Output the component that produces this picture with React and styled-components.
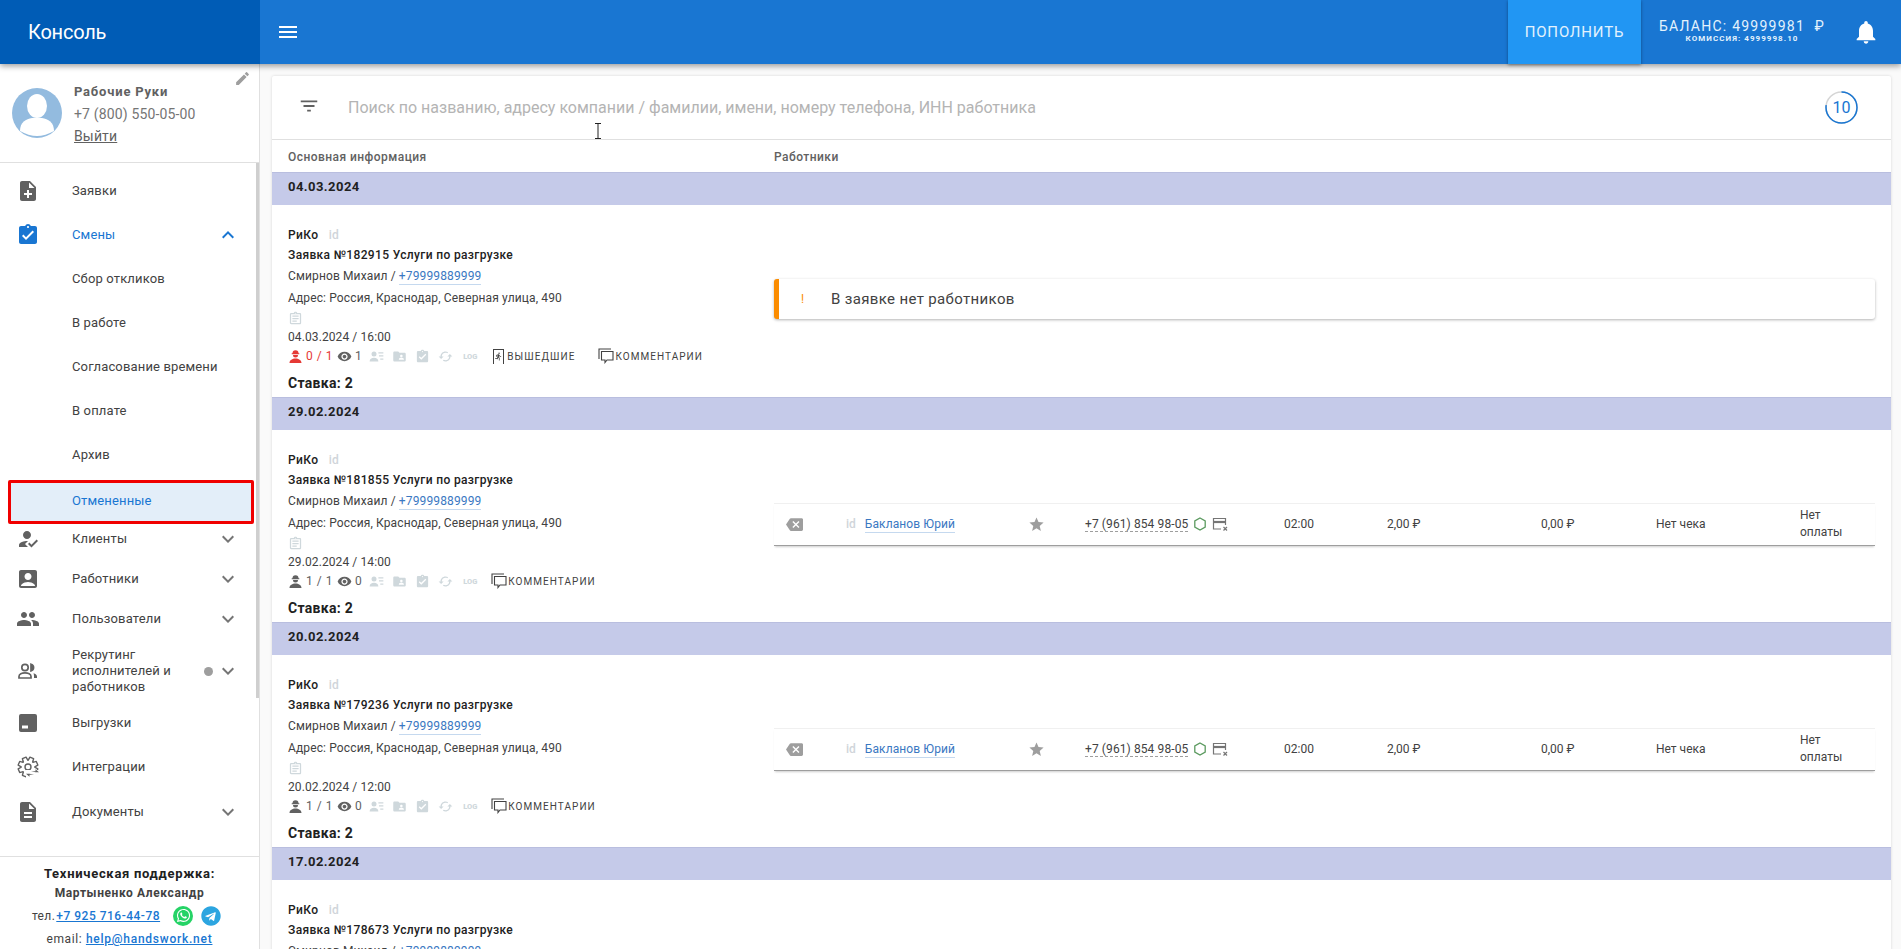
import React from 'react';
import styled, { createGlobalStyle } from 'styled-components';
import {
  MdMenu, MdNotifications, MdEdit, MdNoteAdd, MdAssignmentTurnedIn, MdExpandLess, MdExpandMore,
  MdHowToReg, MdAccountBox, MdPeople, MdDescription,
  MdFilterList, MdOutlineAssignment, MdVisibility, MdFolderShared, MdCached,
  MdBackspace, MdStar, MdDirectionsRun,
} from 'react-icons/md';
import { FaWhatsapp, FaTelegram } from 'react-icons/fa';

const GlobalStyle = createGlobalStyle`
    html, body { margin: 0; padding: 0; height: 100%; overflow: hidden; }
    body { font-family: Roboto, "Liberation Sans", sans-serif; background: #fafafa; color: #212121; }
    *, *::before, *::after { box-sizing: border-box; }
`;

const blue = '#1976d2';

const Page = styled.div`
    height: 100vh;
    display: flex;
    flex-direction: column;
    overflow: hidden;
`;

const Header = styled.header`
    height: 64px;
    flex: none;
    display: flex;
    align-items: center;
    background: ${blue};
    color: white;
    box-shadow: 0 2px 6px rgba(0,0,0,.4);
    position: relative;
    z-index: 5;
`;

const Brand = styled.div`
    width: 260px;
    height: 100%;
    padding-left: 28px;
    display: flex;
    align-items: center;
    background: #005cb6;
    font-size: 20px;
    letter-spacing: -.2px;
`;

const MenuButton = styled.div`
    margin-left: 16px;
    display: flex;
    font-size: 24px;
`;

const TopUp = styled.div`
    margin-left: auto;
    width: 133px;
    height: 100%;
    display: flex;
    align-items: center;
    justify-content: center;
    background: #2196f3;
    font-size: 15px;
    letter-spacing: .85px;
    color: #e3f2fd;
    box-shadow: 0 1px 3px rgba(0,0,0,.4);
`;

const Balance = styled.div`
    margin-left: 15px;
    width: 172px;
    text-align: center;
    font-size: 14px;
    line-height: 14px;
    letter-spacing: 1.25px;
    color: #e3f2fd;
    margin-top: -3px;
`;

const Commission = styled.div`
    font-size: 8px;
    line-height: 9px;
    margin-top: 1px;
    font-weight: 700;
    letter-spacing: 1.05px;
`;

const Bell = styled.div`
    margin: 0 21px 0 24px;
    display: flex;
    font-size: 28px;
`;

const Body = styled.div`
    flex: 1;
    min-height: 0;
    display: flex;
`;

const Sidebar = styled.aside`
    width: 260px;
    flex: none;
    display: flex;
    flex-direction: column;
    background: white;
    border-right: 1px solid #e0e0e0;
`;

const Profile = styled.div`
    height: 99px;
    flex: none;
    padding: 24px 0 0 12px;
    display: flex;
    gap: 12px;
    border-bottom: 1px solid #e0e0e0;
    position: relative;
`;

const EditIcon = styled(MdEdit)`
    position: absolute;
    top: 6px;
    right: 8px;
    color: #9e9e9e;
    font-size: 17px;
`;

const ProfileText = styled.div`
    font-size: 14px;
    line-height: 22px;
    color: #757575;
    margin-top: -7px;
    letter-spacing: .15px;
`;

const ProfileName = styled.div`
    font-weight: 700;
    font-size: 13px;
    letter-spacing: .8px;
    color: #616161;
`;

const Logout = styled.div`
    text-decoration: underline;
    color: #616161;
`;

const Nav = styled.nav`
    flex: 1;
    min-height: 0;
    padding-top: 6px;
    position: relative;
`;

const Scrollbar = styled.div`
    position: absolute;
    top: 0;
    right: 0;
    width: 3px;
    height: 535px;
    background: #cfcfcf;
`;

const NavRow = styled.div`
    height: ${({ $h }) => $h || 44}px;
    display: flex;
    align-items: center;
    padding-left: 72px;
    padding-right: 19px;
    position: relative;
    font-size: 13px;
    line-height: 16px;
    letter-spacing: .15px;
    color: ${({ $active }) => ($active ? blue : '#424242')};
    ${({ $boxed }) => $boxed && `
        &::after {
            content: '';
            position: absolute;
            top: 3px;
            left: 8px;
            right: 5px;
            height: 44px;
            border: 3px solid #f00000;
            border-radius: 2px;
            background: #e3eef9;
            z-index: 0;
        }
    `}
`;

const NavIcon = styled.span`
    position: absolute;
    left: 16px;
    top: 50%;
    transform: translateY(-50%);
    display: flex;
    font-size: 24px;
    color: ${({ $active }) => ($active ? blue : '#616161')};
`;

const NavLabel = styled.span`
    position: relative;
    z-index: 1;
    flex: 1;
    top: ${({ $boxed }) => ($boxed ? 3 : 0)}px;
    max-width: ${({ $wrap }) => ($wrap ? '110px' : 'none')};
`;

const Chevron = styled.span`
    display: flex;
    margin-left: ${({ $tight }) => ($tight ? 0 : 'auto')};
    font-size: 24px;
    color: ${({ $active }) => ($active ? blue : '#757575')};
`;

const Dot = styled.span`
    width: 9px;
    height: 9px;
    border-radius: 50%;
    background: #9e9e9e;
    margin-left: auto;
    margin-right: 3px;
`;

const Support = styled.div`
    height: 93px;
    flex: none;
    padding-top: 7px;
    border-top: 1px solid #e0e0e0;
    text-align: center;
    font-size: 12px;
    line-height: 20px;
    letter-spacing: .6px;
    color: #424242;
`;

const SupportTitle = styled.div`
    font-size: 13px;
    font-weight: 700;
    color: #212121;
    line-height: 19px;
    letter-spacing: .7px;
`;

const SupportName = styled.div`
    font-weight: 700;
    line-height: 20px;
`;

const SupportPhone = styled.div`
    display: flex;
    align-items: center;
    justify-content: center;
    height: 25px;
    gap: 1px;
    padding-right: 6px;
    margin-bottom: 1px;
    letter-spacing: .4px;
`;

const SupportLink = styled.a`
    color: ${blue};
    font-weight: 500;
    letter-spacing: ${({ $spacing }) => $spacing || 0.75}px;
    text-decoration: underline;
`;

const Messenger = styled.span`
    width: 20px;
    height: 20px;
    margin-left: ${({ $ml }) => $ml}px;
    border-radius: 50%;
    display: flex;
    align-items: center;
    justify-content: center;
    color: ${({ $bg }) => ($bg ? 'white' : '#2ca5e0')};
    background: ${({ $bg }) => $bg || 'transparent'};
    font-size: ${({ $bg }) => ($bg ? 15 : 20)}px;
`;

const Main = styled.main`
    flex: 1;
    min-width: 0;
    padding: 12px 10px 0 12px;
    position: relative;
`;

const Card = styled.div`
    background: white;
    box-shadow: 0 0 3px rgba(0,0,0,.15);
    border-radius: 2px;
`;

const SearchBar = styled.div`
    height: 64px;
    padding: 0 33px 0 26px;
    display: flex;
    align-items: center;
    border-bottom: 1px solid #e0e0e0;
`;

const FilterIcon = styled(MdFilterList)`
    color: #616161;
    font-size: 22px;
    margin-top: -4px;
`;

const Placeholder = styled.div`
    margin-left: 28px;
    flex: 1;
    font-size: 16px;
    color: #b4b4b4;
    margin-top: -1px;
`;

const Counter = styled.div`
    width: 33px;
    height: 33px;
    position: relative;
    display: flex;
    align-items: center;
    justify-content: center;
    font-size: 16px;
    color: ${blue};
`;

const CounterRing = styled.svg`
    position: absolute;
    inset: 0;
`;

const ColumnHead = styled.div`
    height: 32px;
    padding-top: 2px;
    display: grid;
    grid-template-columns: 486px 1fr;
    align-items: center;
    padding-left: 16px;
    font-size: 12px;
    font-weight: 500;
    letter-spacing: .45px;
    color: #616161;
`;

const DateBar = styled.div`
    height: 33px;
    padding: 0 0 5px 16px;
    display: flex;
    align-items: center;
    background: #c5cae9;
    border-top: 1px solid #b9bedf;
    font-size: 13px;
    font-weight: 700;
    letter-spacing: .45px;
    color: #212121;
`;

const Group = styled.div`
    height: 192px;
    display: grid;
    grid-template-columns: 502px 1fr;
    align-items: center;
`;

const Info = styled.div`
    height: 100%;
    padding: 20px 0 0 16px;
    font-size: 12px;
    color: #424242;
`;

const Company = styled.div`
    height: 20px;
    line-height: 20px;
    font-weight: 500;
    color: #212121;
    font-size: 12px;
    letter-spacing: .35px;
`;

const IdMark = styled.span`
    color: #d0d5da;
    font-weight: 500;
    margin-left: ${({ $ml }) => $ml || 0}px;
    font-size: 12px;
`;

const OrderTitle = styled.div`
    height: 20px;
    line-height: 20px;
    font-weight: 500;
    font-size: 12px;
    letter-spacing: .35px;
    color: #212121;
`;

const InfoLine = styled.div`
    height: 22px;
    line-height: 23px;
    letter-spacing: .13px;
`;

const PhoneLink = styled.span`
    color: #3a78c2;
    border-bottom: 1px solid #c5d9ef;
    padding-bottom: 1px;
`;

const ClipRow = styled.div`
    height: 18px;
    display: flex;
    align-items: center;
    font-size: 15px;
    color: #cfd8dc;
`;

const DateLine = styled.div`
    height: 20px;
    line-height: 20px;
    letter-spacing: .1px;
`;

const Stats = styled.div`
    height: 18px;
    display: flex;
    align-items: center;
    color: ${({ $alert }) => ($alert ? '#e53935' : '#616161')};
`;

const StatIcon = styled.span`
    display: flex;
    width: ${({ $w }) => $w || 15}px;
    justify-content: center;
    margin-right: ${({ $mr }) => $mr ?? 4}px;
    font-size: ${({ $size }) => $size || 15}px;
    color: ${({ $color }) => $color || 'inherit'};
`;

const StatNumber = styled.span`
    margin-right: ${({ $mr }) => $mr || 4}px;
    color: ${({ $color }) => $color || 'inherit'};
    letter-spacing: .5px;
`;

const LogMark = styled.span`
    font-size: 7.5px;
    font-weight: 900;
    color: #cfd8dc;
    margin-right: 14px;
`;

const ActionLink = styled.span`
    display: flex;
    align-items: center;
    margin-left: ${({ $ml }) => $ml || 0}px;
    margin-right: ${({ $mr }) => $mr || 0}px;
    font-size: 10px;
    letter-spacing: 1.05px;
    color: #424242;
`;

const Rate = styled.div`
    margin-top: 8px;
    height: 20px;
    line-height: 20px;
    font-weight: 700;
    font-size: 14px;
    letter-spacing: .3px;
    color: #212121;
`;

const Workers = styled.div`
    padding-right: 16px;
`;

const EmptyAlert = styled.div`
    height: 40px;
    margin-top: -4px;
    padding-left: 22px;
    display: flex;
    align-items: center;
    background: white;
    border-left: 5px solid #fb8c00;
    border-radius: 3px;
    box-shadow: 0 1px 3px rgba(0,0,0,.3);
    font-size: 15px;
    letter-spacing: .35px;
    color: #424242;
`;

const AlertMark = styled.span`
    width: 30px;
    color: #fb8c00;
    font-size: 12px;
`;

const WorkerRow = styled.div`
    height: 43px;
    margin-top: -4px;
    padding-left: 12px;
    display: grid;
    grid-template-columns: 60px 182px 57px 199px 103px 154px 115px 144px 1fr;
    align-items: center;
    border-top: 1px solid #f0f0f0;
    border-bottom: 1px solid #9e9e9e;
    box-shadow: 0 2px 2px -1px rgba(0,0,0,.2);
    font-size: 12px;
    color: #424242;
`;

const WorkerName = styled.span`
    color: #3a78c2;
    border-bottom: 1px solid #c5d9ef;
    padding-bottom: 1px;
    letter-spacing: .1px;
`;

const IconCell = styled.span`
    display: flex;
    font-size: ${({ $size }) => $size}px;
    color: ${({ $color }) => $color};
`;

const PhoneCell = styled.span`
    display: flex;
    align-items: center;
    gap: 5px;
`;

const WorkerPhone = styled.span`
    border-bottom: 1px dashed #9e9e9e;
    letter-spacing: .1px;
`;

const PayCell = styled.span`
    line-height: 17px;
    max-width: 50px;
`;

const TextCursor = styled.svg`
    position: absolute;
    left: 334px;
    top: 59px;
`;

const Avatar = () => (
  <svg width="50" height="50" viewBox="0 0 50 50" style={{ flex: 'none' }}>
    <circle cx="25" cy="25" r="25" fill="#93bbdf" />
    <ellipse cx="25" cy="18" rx="10" ry="12" fill="white" />
    <path d="M8 43c0-9 6-12 12-13h10c6 1 12 4 12 13-5 3-12 5-17 5s-12-2-17-5z" fill="white" />
  </svg>
);

const ExportIcon = () => (
  <svg width="24" height="24" viewBox="0 0 24 24" fill="currentColor">
    <path d="M5 3h14a2 2 0 0 1 2 2v14a2 2 0 0 1-2 2H5a2 2 0 0 1-2-2V5a2 2 0 0 1 2-2zm1 11.5v3h6v-3H6z" />
  </svg>
);

const RecruitIcon = () => (
  <svg width="24" height="24" viewBox="0 0 24 24" fill="none" stroke="currentColor" strokeWidth="1.7">
    <circle cx="9" cy="8.5" r="3.2" />
    <path d="M3 19v-1.5c0-2.4 3-3.7 6-3.7s6 1.3 6 3.7V19H3z" />
    <path d="M15 5.2a3.4 3.4 0 0 1 0 6.6z" fill="currentColor" />
    <path d="M17.5 14.2c2 .5 3.5 1.6 3.5 3.3V19h-3v-2c0-1-.2-2-.5-2.8z" fill="currentColor" stroke="none" />
  </svg>
);

// 8 зубцов шестерёнки, считаем контур в цикле
const gearPoints = Array.from({ length: 8 }, (_, i) => {
  const a = (i * Math.PI) / 4 + Math.PI / 8;
  const p = (r, d) => `${(12 + r * Math.cos(a + d)).toFixed(2)},${(12 + r * Math.sin(a + d)).toFixed(2)}`;
  return [p(6.8, -0.36), p(10, -0.2), p(10, 0.2), p(6.8, 0.36)].join(' ');
}).join(' ');

const IntegrationIcon = () => (
  <svg width="24" height="24" viewBox="0 0 24 24" fill="none" stroke="currentColor" strokeWidth="1.4">
    <polygon points={gearPoints} strokeLinejoin="round" />
    <circle cx="12" cy="12" r="3" />
    <path d="M10 15h13v8H10z" fill="white" stroke="none" />
    <path d="M15 16.2h4.5v-2l3.5 3-3.5 .1zM18 19.8h-4.5v2l-3.5-3 3.5-.1z" fill="currentColor" stroke="none" />
  </svg>
);

const WorkerMark = () => (
  <svg width="15" height="15" viewBox="0 0 15 15" fill="currentColor">
    <path d="M4.5 4.2a3 3 0 0 1 6 0h.8v1H3.7v-1zM5 6h5a2.5 2.5 0 0 1-5 0zM1.5 14c0-3 3-4.6 6-4.6s6 1.6 6 4.6z" />
  </svg>
);

const ListPersonIcon = () => (
  <svg width="15" height="15" viewBox="0 0 24 24" fill="currentColor">
    <circle cx="8" cy="8" r="4" />
    <path d="M1 20c0-4 3-6 7-6s7 2 7 6H1zM15 5h8v2h-8zM16 10h7v2h-7zM18 15h5v2h-5z" />
  </svg>
);

const ExitBox = styled.span`
    display: flex;
    align-items: center;
    justify-content: center;
    width: 11px;
    height: 15px;
    margin-right: 3px;
    border: 1px solid #424242;
    border-bottom: 0;
    font-size: 13px;
`;

const CommentsIcon = () => (
  <svg width="16" height="16" viewBox="0 0 16 16" fill="none" stroke="#424242" strokeWidth="1.1" style={{ marginRight: 1 }}>
    <path d="M1 11V1h12" />
    <path d="M3.5 3.5h11.5v8.5H9l-2 2.5v-2.5H3.5z" />
  </svg>
);

const Hexagon = () => (
  <svg width="14" height="14" viewBox="0 0 14 14" fill="none" stroke="#5b9a5f" strokeWidth="1.3">
    <path d="M7 1l5.2 3v6L7 13l-5.2-3V4z" />
  </svg>
);

const CardOff = () => (
  <svg width="16" height="14" viewBox="0 0 16 14" fill="none" stroke="#757575" strokeWidth="1.2">
    <path d="M9 12H1.5V1.5h12V8" />
    <path d="M1.5 5h12" strokeWidth="2.2" />
    <path d="M11.5 10l3.5 3.5M15 10l-3.5 3.5" />
  </svg>
);

const navItems = [
  { label: 'Заявки', icon: <MdNoteAdd /> },
  { label: 'Смены', icon: <MdAssignmentTurnedIn />, active: true, open: true },
  { label: 'Сбор откликов' },
  { label: 'В работе' },
  { label: 'Согласование времени' },
  { label: 'В оплате' },
  { label: 'Архив' },
  { label: 'Отмененные', active: true, boxed: true, h: 42 },
  { label: 'Клиенты', icon: <MdHowToReg />, more: true, h: 40 },
  { label: 'Работники', icon: <MdAccountBox />, more: true, h: 40 },
  { label: 'Пользователи', icon: <MdPeople />, more: true, h: 40 },
  { label: 'Рекрутинг исполнителей и работников', icon: <RecruitIcon />, more: true, dot: true, h: 64, wrap: true },
  { label: 'Выгрузки', icon: <ExportIcon />, h: 40 },
  { label: 'Интеграции', icon: <IntegrationIcon />, h: 47 },
  { label: 'Документы', icon: <MdDescription />, more: true },
];

const groups = [
  { date: '04.03.2024', order: '182915', when: '04.03.2024 / 16:00', count: '0 / 1', views: '1', left: true },
  { date: '29.02.2024', order: '181855', when: '29.02.2024 / 14:00', count: '1 / 1', views: '0', worker: true },
  { date: '20.02.2024', order: '179236', when: '20.02.2024 / 12:00', count: '1 / 1', views: '0', worker: true },
  { date: '17.02.2024', order: '178673', when: '17.02.2024 / 10:00', count: '1 / 1', views: '0', worker: true },
];

const paleIcon = '#cfd8dc';

const OrderInfo = ({ group }) => (
  <Info>
    <Company>РиКо <IdMark $ml={7}>id</IdMark></Company>
    <OrderTitle>Заявка №{group.order} Услуги по разгрузке</OrderTitle>
    <InfoLine>Смирнов Михаил / <PhoneLink>+79999889999</PhoneLink></InfoLine>
    <InfoLine>Адрес: Россия, Краснодар, Северная улица, 490</InfoLine>
    <ClipRow><MdOutlineAssignment /></ClipRow>
    <DateLine>{group.when}</DateLine>
    <Stats $alert={group.left}>
      <StatIcon $mr={3}><WorkerMark /></StatIcon>
      <StatNumber>{group.count}</StatNumber>
      <StatIcon $color="#616161" $mr={3}><MdVisibility /></StatIcon>
      <StatNumber $color="#616161" $mr={7}>{group.views}</StatNumber>
      <StatIcon $color={paleIcon} $mr={8}><ListPersonIcon /></StatIcon>
      <StatIcon $color={paleIcon} $mr={8}><MdFolderShared /></StatIcon>
      <StatIcon $color={paleIcon} $mr={8}><MdAssignmentTurnedIn /></StatIcon>
      <StatIcon $color={paleIcon} $mr={10}><MdCached /></StatIcon>
      <LogMark>LOG</LogMark>
      {group.left && <ActionLink $ml={2} $mr={23}><ExitBox><MdDirectionsRun /></ExitBox>ВЫШЕДШИЕ</ActionLink>}
      <ActionLink><CommentsIcon />КОММЕНТАРИИ</ActionLink>
    </Stats>
    <Rate>Ставка: 2</Rate>
  </Info>
);

const WorkerLine = () => (
  <WorkerRow>
    <IconCell $size={17} $color="#9e9e9e"><MdBackspace /></IconCell>
    <span><IdMark>id</IdMark>&nbsp;&nbsp;&nbsp;<WorkerName>Бакланов Юрий</WorkerName></span>
    <IconCell $size={17} $color="#9e9e9e"><MdStar /></IconCell>
    <PhoneCell><WorkerPhone>+7 (961) 854 98-05</WorkerPhone><Hexagon /><CardOff /></PhoneCell>
    <span>02:00</span>
    <span>2,00 ₽</span>
    <span>0,00 ₽</span>
    <span>Нет чека</span>
    <PayCell>Нет оплаты</PayCell>
  </WorkerRow>
);

export default function App() {
  return (
    <Page>
      <GlobalStyle />
      <Header>
        <Brand>Консоль</Brand>
        <MenuButton><MdMenu /></MenuButton>
        <TopUp>ПОПОЛНИТЬ</TopUp>
        <Balance>
          БАЛАНС: 49999981 &nbsp;₽
          <Commission>КОМИССИЯ: 4999998.10</Commission>
        </Balance>
        <Bell><MdNotifications /></Bell>
      </Header>
      <Body>
        <Sidebar>
          <Profile>
            <Avatar />
            <ProfileText>
              <ProfileName>Рабочие Руки</ProfileName>
              <div>+7 (800) 550-05-00</div>
              <Logout>Выйти</Logout>
            </ProfileText>
            <EditIcon />
          </Profile>
          <Nav>
            <Scrollbar />
            {navItems.map(item => (
              <NavRow key={item.label} $h={item.h} $active={item.active} $boxed={item.boxed}>
                {item.icon && <NavIcon $active={item.active}>{item.icon}</NavIcon>}
                <NavLabel $boxed={item.boxed} $wrap={item.wrap}>{item.label}</NavLabel>
                {item.dot && <Dot />}
                {item.open && <Chevron $active><MdExpandLess /></Chevron>}
                {item.more && <Chevron $tight={item.dot}><MdExpandMore /></Chevron>}
              </NavRow>
            ))}
          </Nav>
          <Support>
            <SupportTitle>Техническая поддержка:</SupportTitle>
            <SupportName>Мартыненко Александр</SupportName>
            <SupportPhone>
              тел.<SupportLink $spacing={0.5}>+7 925 716-44-78</SupportLink>
              <Messenger $ml={12} $bg="#25d366"><FaWhatsapp /></Messenger>
              <Messenger $ml={7}><FaTelegram /></Messenger>
            </SupportPhone>
            <div>email: <SupportLink>help@handswork.net</SupportLink></div>
          </Support>
        </Sidebar>
        <Main>
          <Card>
            <SearchBar>
              <FilterIcon />
              <Placeholder>Поиск по названию, адресу компании / фамилии, имени, номеру телефона, ИНН работника</Placeholder>
              <Counter>
                <CounterRing width="33" height="33" viewBox="0 0 33 33" fill="none" strokeWidth="1.5">
                  <circle cx="16.5" cy="16.5" r="15.5" stroke="#d5d5d5" />
                  <circle cx="16.5" cy="16.5" r="15.5" stroke={blue} strokeDasharray="75 100" transform="rotate(-90 16.5 16.5)" />
                </CounterRing>
                10
              </Counter>
            </SearchBar>
            <ColumnHead>
              <div>Основная информация</div>
              <div>Работники</div>
            </ColumnHead>
            {groups.map(group => (
              <React.Fragment key={group.order}>
                <DateBar>{group.date}</DateBar>
                <Group>
                  <OrderInfo group={group} />
                  <Workers>
                    {group.worker
                      ? <WorkerLine />
                      : <EmptyAlert><AlertMark>!</AlertMark>В заявке нет работников</EmptyAlert>}
                  </Workers>
                </Group>
              </React.Fragment>
            ))}
          </Card>
          <TextCursor width="8" height="16" viewBox="0 0 8 16" fill="none" stroke="#222" strokeWidth="1">
            <path d="M1 .5h6M4 .5v15M1 15.5h6" />
          </TextCursor>
        </Main>
      </Body>
    </Page>
  );
}
